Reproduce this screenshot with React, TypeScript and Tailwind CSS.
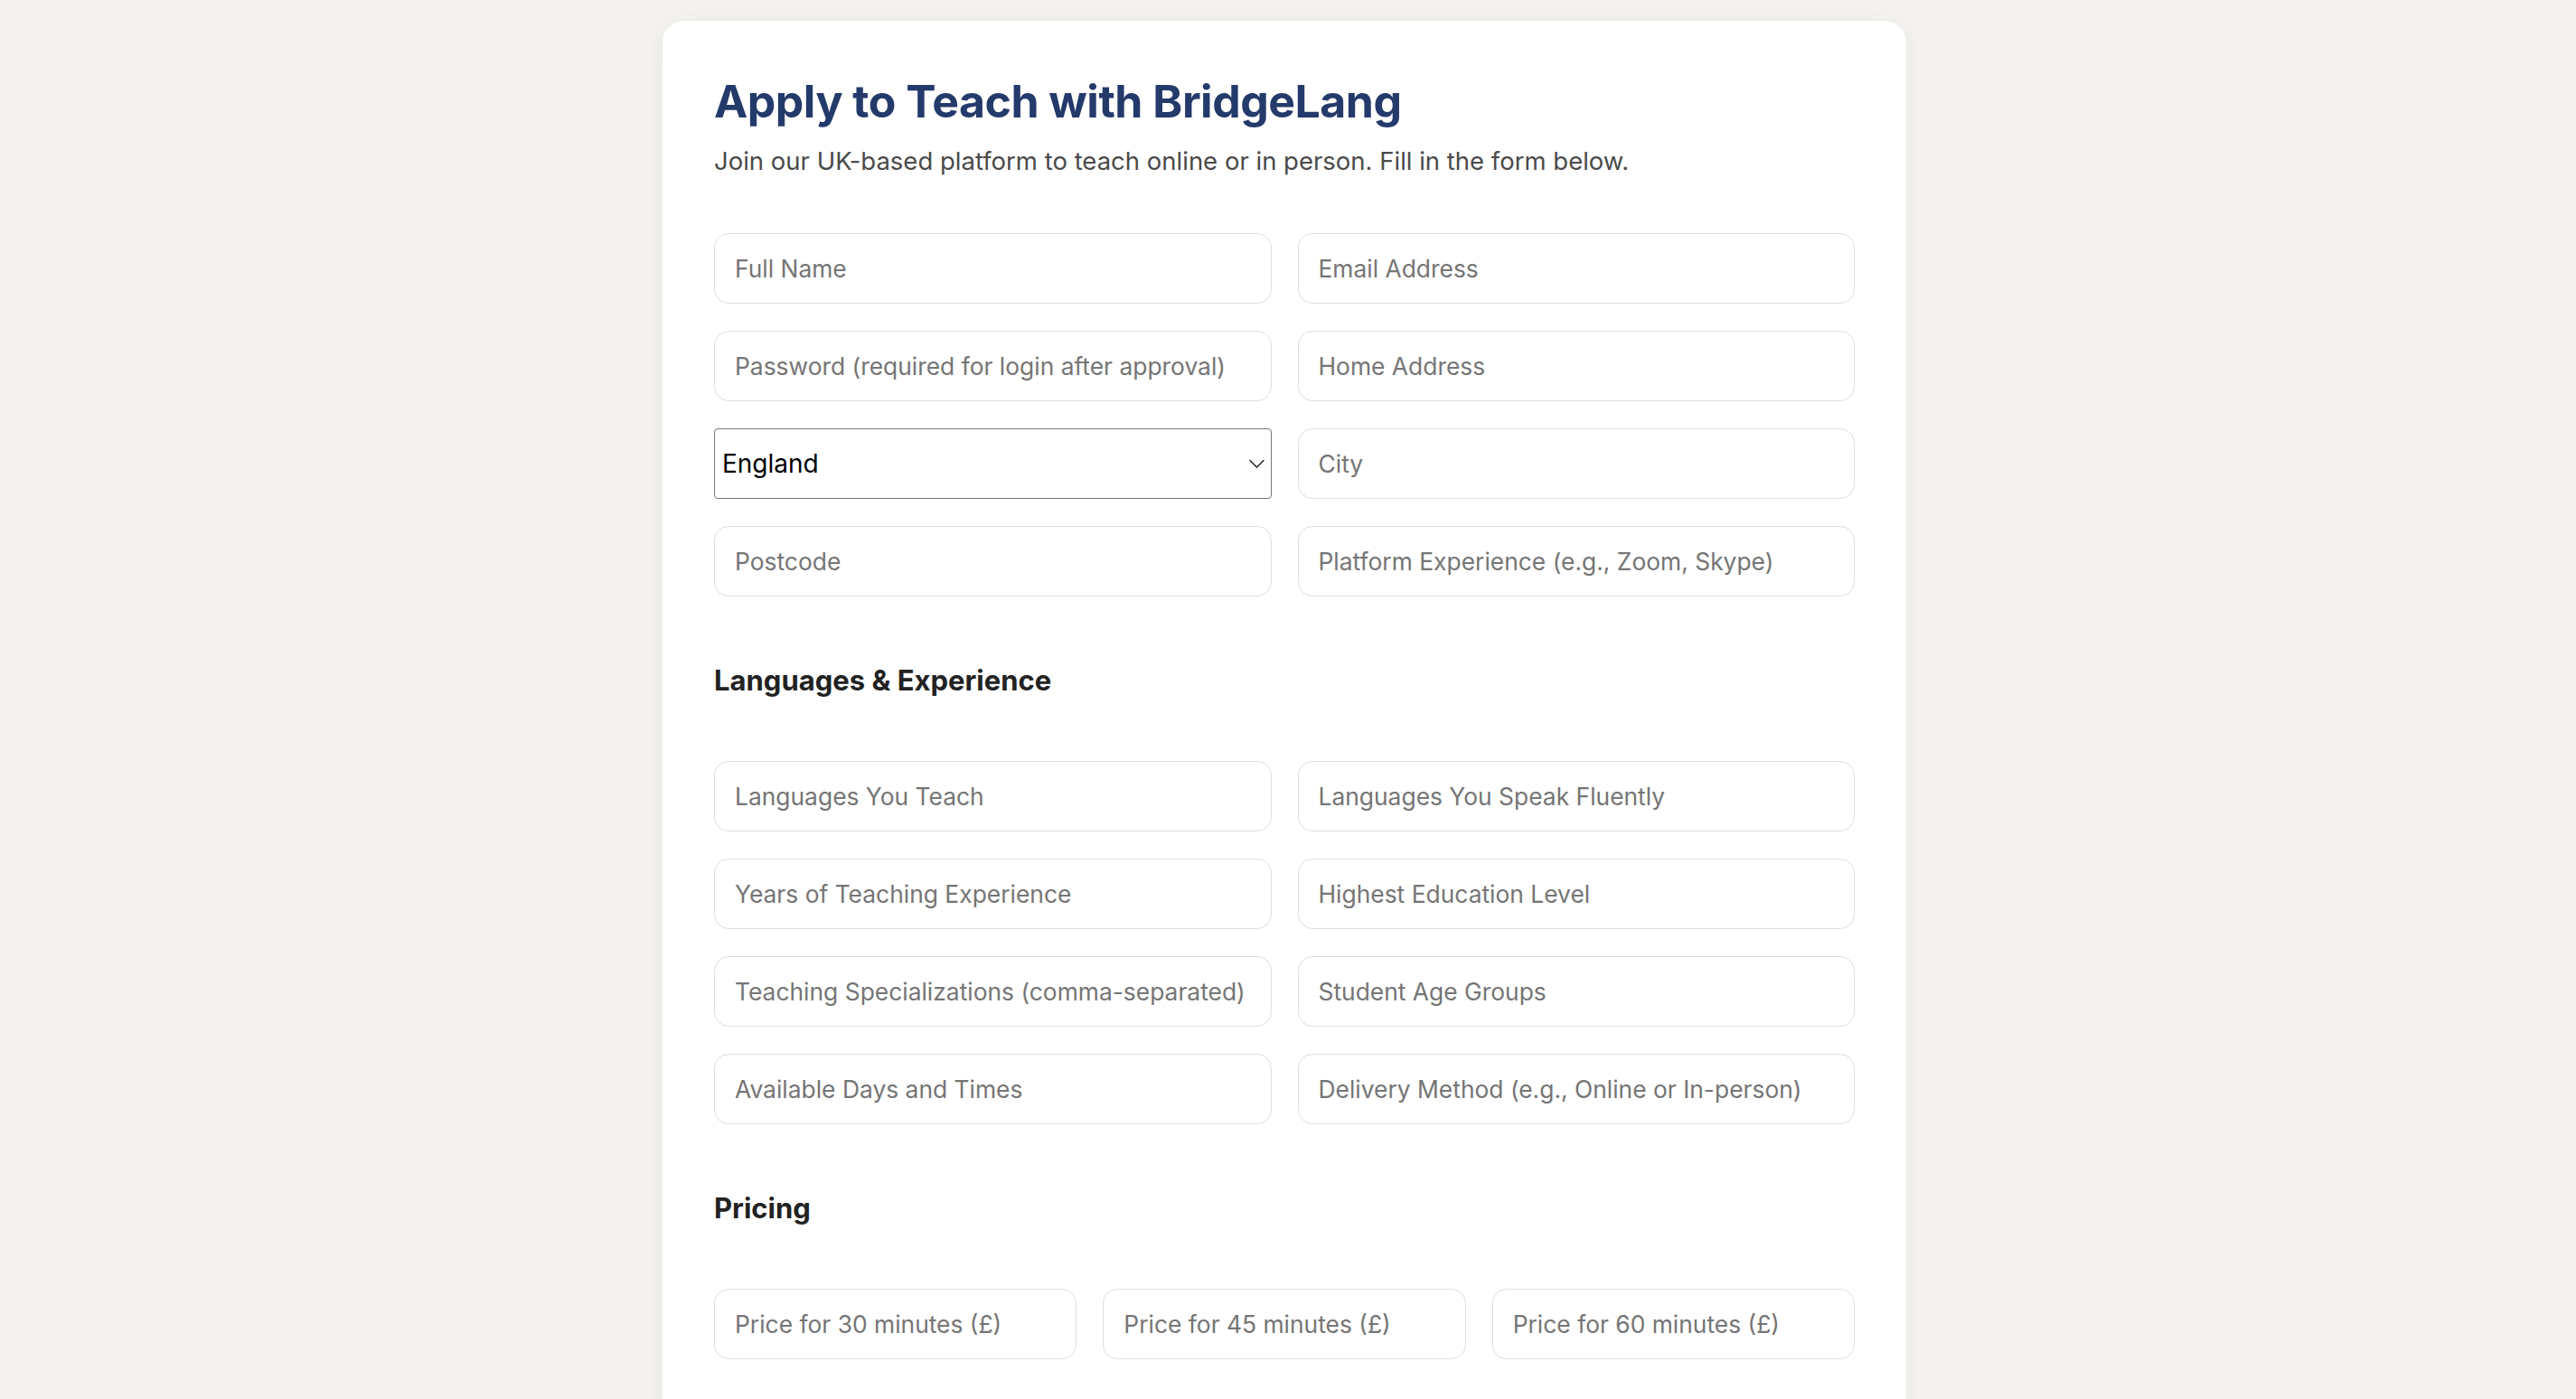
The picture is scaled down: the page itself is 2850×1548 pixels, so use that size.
const basicFields = [
  'Full Name',
  'Email Address',
  'Password (required for login after approval)',
  'Home Address',
];

const experienceFields = [
  'Languages You Teach',
  'Languages You Speak Fluently',
  'Years of Teaching Experience',
  'Highest Education Level',
  'Teaching Specializations (comma-separated)',
  'Student Age Groups',
  'Available Days and Times',
  'Delivery Method (e.g., Online or In-person)',
];

const prices = ['Price for 30 minutes (£)', 'Price for 45 minutes (£)', 'Price for 60 minutes (£)'];

function Field({ placeholder, type = 'text' }: { placeholder: string; type?: string }) {
  return (
    <input
      type={type}
      placeholder={placeholder}
      className="h-[78px] w-full rounded-[16px] border border-[#dedede] bg-white px-[22px] text-[26.4px] text-[#222] outline-none placeholder:text-[#757575]"
    />
  );
}

function SectionTitle({ children }: { children: string }) {
  return <h2 className="mt-[75px] mb-[71px] text-[31px] leading-[36px] font-bold text-[#222]">{children}</h2>;
}

export default function App() {
  return (
    <div className="min-h-screen bg-[#f4f3ef] pt-[23px] pr-[8px] pb-10 font-['Inter',sans-serif]">
      <div className="mx-auto w-[1376px] rounded-[24px] bg-white px-[57px] pt-[58px] pb-[60px] shadow-[0_4px_28px_rgba(0,0,0,0.06)]">
        <h1 className="text-[50px] leading-[62px] font-bold tracking-[-0.5px] text-[#243a6b]">Apply to Teach with BridgeLang</h1>
        <p className="mt-[15px] text-[27.5px] leading-[40px] text-[#4a4a4a]">
          Join our UK-based platform to teach online or in person. Fill in the form below.
        </p>

        <form className="mt-[60px]">
          <div className="grid grid-cols-2 gap-x-[29px] gap-y-[30px]">
            <Field placeholder={basicFields[0]} type="text" />
            <Field placeholder={basicFields[1]} type="email" />
            <Field placeholder={basicFields[2]} type="password" />
            <Field placeholder={basicFields[3]} />
            <div className="relative">
              <select className="h-[78px] w-full appearance-none rounded-[4px] border border-[#767676] bg-white pl-[8px] text-[28px] text-black outline-none">
                <option>England</option>
                <option>Scotland</option>
                <option>Wales</option>
                <option>Northern Ireland</option>
              </select>
              <svg
                className="pointer-events-none absolute top-[34px] right-[8px]"
                width="17"
                height="10"
                viewBox="0 0 17 10"
                fill="none"
                stroke="#222"
                strokeWidth="1.5"
                strokeLinecap="round"
                strokeLinejoin="round"
              >
                <path d="M1 1.5l7.5 7.5 7.5-7.5" />
              </svg>
            </div>
            <Field placeholder="City" />
            <Field placeholder="Postcode" />
            <Field placeholder="Platform Experience (e.g., Zoom, Skype)" />
          </div>

          <SectionTitle>Languages &amp; Experience</SectionTitle>
          <div className="grid grid-cols-2 gap-x-[29px] gap-y-[30px]">
            {experienceFields.map((f) => (
              <Field key={f} placeholder={f} />
            ))}
          </div>

          <SectionTitle>Pricing</SectionTitle>
          <div className="grid grid-cols-3 gap-x-[29px]">
            {prices.map((p) => (
              <Field key={p} placeholder={p} type="number" />
            ))}
          </div>

          <SectionTitle>About You</SectionTitle>
          <textarea
            placeholder="Tell us about your teaching style"
            className="h-[200px] w-full rounded-[16px] border border-[#dedede] px-[22px] py-[20px] text-[26px] outline-none placeholder:text-[#757575]"
          />
          <button
            type="submit"
            className="mt-[40px] h-[78px] w-full rounded-[16px] bg-[#243a6b] text-[26px] font-semibold text-white"
          >
            Submit Application
          </button>
        </form>
      </div>
    </div>
  );
}
